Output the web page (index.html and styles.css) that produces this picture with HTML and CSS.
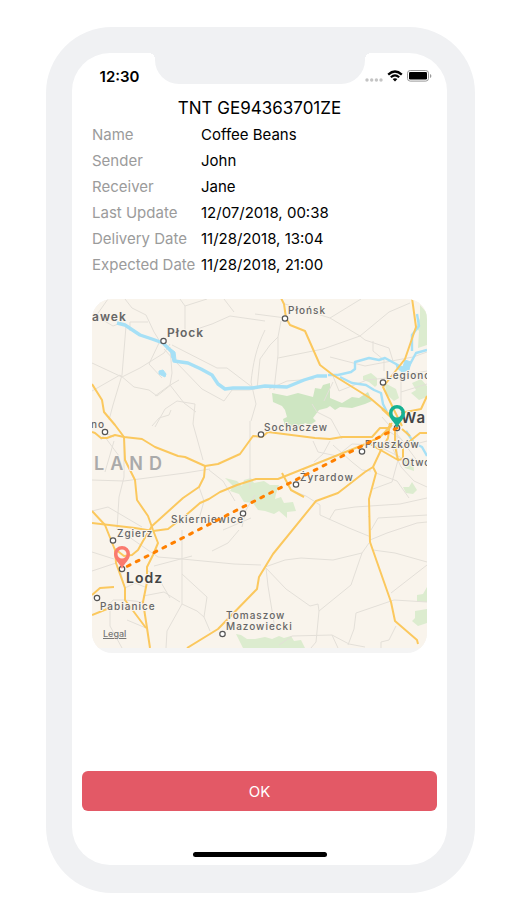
FILE: index.html
```
<!DOCTYPE html>
<html lang="en">
<head>
    <meta charset="UTF-8">
    <meta name="viewport" content="width=device-width, initial-scale=1.0">
    <title>Parcel details</title>
    <link rel="stylesheet" href="styles.css">
</head>
<body>
    <div class="phone">
        <div class="screen">
            <header class="status-bar">
                <div class="time">12:30</div>
                <div class="notch"></div>
                <div class="status-icons">
                    <svg class="signal" viewBox="0 0 18 4" aria-hidden="true">
                        <circle cx="2" cy="2" r="1.7"/>
                        <circle cx="6.7" cy="2" r="1.7"/>
                        <circle cx="11.4" cy="2" r="1.7"/>
                        <circle cx="16" cy="2" r="1.7"/>
                    </svg>
                    <svg class="wifi" viewBox="0 0 16 12" aria-hidden="true">
                        <path d="M1.2 4.6Q8-1.6 14.8 4.6" stroke-width="2.3"/>
                        <path d="M3.8 7.3Q8 3.5 12.2 7.3" stroke-width="2.1"/>
                        <path class="wifi-dot" d="M5.6 9.1Q8 7.2 10.4 9.1L8 11.5z"/>
                    </svg>
                    <svg class="battery" viewBox="0 0 25 12" aria-hidden="true">
                        <rect class="battery-case" x=".5" y=".5" width="21" height="10.6" rx="2.7"/>
                        <rect x="2" y="2" width="18" height="7.6" rx="1.3"/>
                        <path class="battery-tip" d="M23 4v4q1.4-.6 1.4-2T23 4z"/>
                    </svg>
                </div>
            </header>

            <main class="content">
                <h1>TNT GE94363701ZE</h1>

                <dl class="details">
                    <dt>Name</dt>
                    <dd>Coffee Beans</dd>
                    <dt>Sender</dt>
                    <dd>John</dd>
                    <dt>Receiver</dt>
                    <dd>Jane</dd>
                    <dt>Last Update</dt>
                    <dd>12/07/2018, 00:38</dd>
                    <dt>Delivery Date</dt>
                    <dd>11/28/2018, 13:04</dd>
                    <dt>Expected Date</dt>
                    <dd>11/28/2018, 21:00</dd>
                </dl>

                <div class="map">
                    <svg viewBox="0 0 335 349" role="img" aria-label="Route from Lodz to Warsaw">
                        <!-- forests -->
                        <g class="forest">
                            <path class="forest-dark" d="M180 94l15 3 11-3 15 4 2-9 6 1 2-4 7-2v15l12 5 10-6 7 1 9-6 4 9-7 3-13 4-12-1-5 3-5-4-3 2-8 2-6 8 3 3-6 4-5-2-6 5-14-2-2-7 4-2-2-7-3-4-9-4z"/>
                            <path d="M133 179l12 3 5 5 2-6 7-2 3 5 10-2 6 4 9 0-3 9-1 5 6-2 3 6 9-1 3 9-9 1 0 6-8-7-5 3-9-3-7-1-5-7-9-1-5-8-9-3 3-5z"/>
                            <path d="M271 77l8-3 6 5 0 7-2 2-6-5-6-2zM293 84l11 6 3 9-5 3-8-7zM320 84l9-4 6 7v11l-8 3-8-7 5-3zM328 6l7 8v32l-9 3 1-17-3-4 4-9zM311 188l6 0 3-5 5 8-4 4-7-1zM325 303v-7l6-1 4-7v15zM323 312l12-2v14l-9 3-6-5 3-3zM144 335l5 1 6 4 8 0 10-2 7 2 7-3 5 2 7-2 3 5 7-1 5 10h-62zM308 158l13 2 1 12-9-3z"/>
                        </g>

                        <!-- secondary roads -->
                        <g class="road-minor">
                            <path d="M16 0L4 17l17 10 8-3M33 0l7 9 14 7 8 17 5 8M0 64l30 14 18-9 24-15 6-9M34 27l-4 49-9 30-4 15M38 32V23h18M0 92l28-16 14 12 15 3 8 6 15-12 7-4M57 65l10-21M78 48l2 26-2 12M80 46l45 23h10l25 19"/>
                            <path d="M57 65l13 14M72 50l11 12 27 28 22 12 8-11h17l6-1M88 0l5 7V34M93 34l27-9 18-8 35 5M93 7l22-7M132 0l10 13M173 31c-9 18-12 34-14 52l5 22-5 17M63 97l15-11M78 86l14 18 12 9"/>
                            <path d="M63 128l10-18 12-8 18 3-2 20 10 36M194 19l-31-4M189 22l-3 16-8 8-10 14-3 30M186 38v18l-4 35M186 59l45-9 37-13M193 5l45 14 31-19M238 19l30 18 5 4 24 8 4 13M268 37l29-24 21-9M281 42v10l11 9V72M292 79v11M222 80l-27 2-18 8M241 77l6 15 28-11 20-2 40-7M241 83l-9 19M238 58l35 9 48-9 14-5"/>
                            <path d="M60 127l7-8 10-3 2-5M32 138v40l-5 20-2 32M32 182l61-8 25-4M117 171l14 11 12 20M107 188l5 14-5 18M158 122v32M158 154v36M0 181l32 1M0 212l16-4 34 20M22 142l-9 31M9 141l4-7 9 4M13 138l14 19"/>
                            <path d="M27 231l39 27 24 2 52 5 27 1M90 231v29M90 260V305l15 7 7 6M90 275l25 23-3 20 6 14M90 305l-15 27-1 17M55 271l12 9 11 19M62 267l38-10M24 264l-24 8M33 289l10-5 10 4M13 311l8-10 12 0M33 301l18 2M55 283l14-6M0 253l22 7M28 271l5 18M18 303v24l12 22M51 297l21-4 16 10M54 329l-19-8"/>
                            <path d="M120 252l16-8 11-13M131 231l28-12M173 268l20-7 16-2 32 2 29-7 7-10M174 269l20 21 24 17 8-2 1 7-3 31-5 6M227 312l32-26 11-32M174 269l2 18 7 43M187 346l13-9 40-1 6 13M240 336l17 9 16 3M256 346l6-16 2-16 38-13 33 2M281 251l22 3 32 9M299 294l36-28M304 327l-7 14-8 2v6M278 241l17-7 30-10 10-1M279 231l7-12 49-3M276 217l2 2"/>
                            <path d="M198 191l16 6 14 9v10l29 13 22 9M237 221l6-10 20-3 45-3 27-6M221 142l5 11 19 4 15-12 24 1 24 12M238 142l-7 13-9 8M250 140l-11-20-14-7-5-8M260 163l10 8 9 1M260 163l-19-17M293 130l16 10 17 23M296 139l13 29 13 14 13 6M284 174l21 8 12 17M289 150l23-2 23-6M305 129v25M290 118l27 31M306 161l-6 22-19 7M163 196l-9 15-4 17M309 112V82l-7-9M309 93l26-8"/>
                        </g>

                        <!-- rivers and lakes -->
                        <g class="river">
                            <path d="M25 24l8 2 15 10 12 4 11 4 9 9 2 9 14 2 13 6 11 6 6 9 7 5 8-1h19l13-2 22 1 17-7 13-4 10 0" stroke-width="3.4"/>
                            <path d="M236 76l10 0 13-3 4-3v-7l14-4 10 2 6-2 11 6 6 4 7-2 7-13 11-3M320 52v-16l7-9-2-12M248 78l12 6 14 2 8 5 7 3 2 11 4 8M314 132l8 12 8 4 5 9" stroke-width="2.4"/>
                            <path class="lake" d="M67 72l4-1 3 4-1 3-6-3zM79 50l4 3 1 8-4-2zM304 65l7 3 2-7 6 2-2 8-7 2-5-4z"/>
                        </g>

                        <!-- main roads -->
                        <g class="road-main">
                            <path d="M0 85l10 16 2 12 11 13 9 12 1 23 10 20 2 20 11 16 5 14 5 13-5 12-6 12v15l-4 20 4 26 3 20"/>
                            <path d="M0 133l3 1 6 5h6l8-3 9 2 18 2 13 8 23 9 7 1 20 9 13-2 22-10 13-18 9 1 6-5 47 6 15 1 12-2h30l8-9h8l4-5"/>
                            <path d="M113 167l-1 11-5 10-16 11-31 28-9 15-5 9-6 5-8 1-9-7"/>
                            <path d="M0 224l43 5 18 3 15-2 17-13 15-13 9-4 11-7 17-7 19-6h22l90-36 12-6 12-12"/>
                            <path d="M0 212l13 14 6 15 4 10 1 13 9 25v12l21 28M0 296l8-7 14-1M0 316l15-6"/>
                            <path d="M95 349l31-19 39-40 2-12 14-23 43-53 22-8 27-21 8-5 8-17 7-12 2-15"/>
                            <path d="M281 168l3 6-7 26 1 43 21 60 4 19 22 19 1 4M190 174l9 17 13 7"/>
                            <path d="M189-1l3 6 2 14 4 7 15 6 15 34 13 10 37 23 20 17 9 11M320-1l4 29-11 32-22 28 12 25 7 14"/>
                            <path d="M309 114l20-4 6-13M278 145l28 16 5-1v-12l12-10 5-4h7M303 129v18l3 14M303 148h11M310 130l8 7M290 110l15 14 7-10"/>
                        </g>

                        <!-- towns -->
                        <g class="town">
                            <circle cx="71.500" cy="42" r="2.700"/>
                            <circle cx="193" cy="19.500" r="2.700"/>
                            <circle cx="291" cy="83.500" r="2.700"/>
                            <circle cx="13" cy="133" r="2.700"/>
                            <circle cx="169" cy="135.500" r="2.700"/>
                            <circle cx="270" cy="152.500" r="2.700"/>
                            <circle cx="204" cy="185.500" r="2.700"/>
                            <circle cx="151" cy="214.500" r="2.700"/>
                            <circle cx="21" cy="241.500" r="2.700"/>
                            <circle cx="5" cy="299" r="2.700"/>
                            <circle cx="130.500" cy="335" r="2.700"/>
                            <circle cx="30" cy="270" r="2.700"/>
                            <circle cx="305" cy="129" r="2.700"/>
                        </g>

                        <text class="country" x="2" y="171">LAND</text>
                        <g class="label-medium">
                            <text x="0" y="22">awek</text>
                            <text x="75" y="38">Płock</text>
                        </g>
                        <g class="label-small">
                            <text x="196" y="15">Płońsk</text>
                            <text x="294" y="80">Legiono</text>
                            <text x="-1" y="129">no</text>
                            <text x="172" y="132">Sochaczew</text>
                            <text x="273" y="149">Pruszków</text>
                            <text x="310" y="167">Otwo</text>
                            <text x="208" y="182">Żyrardow</text>
                            <text x="79" y="224">Skierniewice</text>
                            <text x="25" y="238">Zgierz</text>
                            <text x="8" y="311">Pabianice</text>
                            <text x="134" y="320">Tomaszow</text>
                            <text x="134" y="331">Mazowiecki</text>
                        </g>
                        <g class="label-large">
                            <text class="capital" x="309" y="124">Wa</text>
                            <text x="34" y="284">Lodz</text>
                        </g>

                        <!-- route and its two ends -->
                        <path class="route" d="M305 129L30 270"/>
                        <path class="pin pin-start" d="M30 270C27 263 22 261 22 255a8 8 0 0 1 16 0C38 261 33 263 30 270zM30 250.500a4.500 4.500 0 1 0 0 9a4.500 4.500 0 1 0 0-9z"/>
                        <path class="pin pin-end" d="M305 129C302 122 297 120 297 114a8 8 0 0 1 16 0C313 120 308 122 305 129zM305 109.500a4.500 4.500 0 1 0 0 9a4.500 4.500 0 1 0 0-9z"/>
                    </svg>
                    <a class="legal" href="#">Legal</a>
                </div>
            </main>

            <footer class="actions">
                <button type="button" class="ok-btn">OK</button>
                <div class="home-indicator"></div>
            </footer>
        </div>
    </div>
</body>
</html>
```
FILE: styles.css
```
* {
    margin: 0;
    padding: 0;
    box-sizing: border-box;
}

body {
    font-family: 'Inter', 'Liberation Sans', sans-serif;
    font-size: 15px;
    color: #000;
    background: white;
    min-height: 100vh;
    padding: 27px 45px 27px 46px;
    display: flex;
    justify-content: center;
}

.phone {
    flex: 1;
    max-width: 480px;
    display: flex;
    background: #f0f1f3;
    border-radius: 66px;
    padding: 26px 28px 28px 26px;
}

.screen {
    flex: 1;
    min-width: 0;
    display: flex;
    flex-direction: column;
    background: white;
    border-radius: 38px;
}

/* Status bar */
.status-bar {
    display: grid;
    grid-template-columns: 1fr 56% 1fr;
    height: 45px;
}

.time {
    font-weight: 600;
    line-height: 18px;
    padding-top: 15px;
    text-align: right;
    padding-right: 15px;
}

.notch {
    position: relative;
    height: 31px;
    background: #f0f1f3;
    border-radius: 0 0 24px 24px;
}

.notch::before,
.notch::after {
    content: '';
    position: absolute;
    top: 0;
    width: 6px;
    height: 6px;
}

.notch::before {
    right: 100%;
    background: radial-gradient(circle at 0 100%, transparent 6px, #f0f1f3 6px);
}

.notch::after {
    left: 100%;
    background: radial-gradient(circle at 100% 100%, transparent 6px, #f0f1f3 6px);
}

.status-icons {
    display: flex;
    align-items: center;
    height: 46px;
    gap: 4px;
}

.signal {
    width: 18px;
    height: 4px;
    margin-top: 8px;
    fill: #c4c4c4;
}

.wifi {
    width: 16px;
    height: 12px;
    fill: none;
    stroke: #000;
}

.wifi-dot {
    fill: #000;
    stroke: none;
}

.battery {
    width: 25px;
    height: 12px;
}

.battery-case {
    fill: none;
    stroke: #999;
}

.battery-tip {
    fill: #999;
}

/* Parcel details */
.content {
    padding: 0 20px;
}

h1 {
    font-size: 17px;
    font-weight: 400;
    line-height: 21px;
    text-align: center;
    margin-bottom: 3px;
}

.details {
    display: grid;
    grid-template-columns: 109px 1fr;
    line-height: 26px;
    white-space: nowrap;
    margin-bottom: 21px;
}

.details dt {
    color: #9b9b9b;
}

/* Map */
.map {
    position: relative;
    overflow: hidden;
    background: #f4f4f4;
    border-radius: 20px;
    padding-bottom: 5px;
}

.map svg {
    display: block;
    width: 100%;
    background: #f9f4ec;
}

.forest {
    fill: #dceccf;
}

.forest-dark {
    fill: #cee6c2;
}

.road-minor {
    fill: none;
    stroke: #e3dfd8;
    stroke-width: 1;
}

.road-main {
    fill: none;
    stroke: #fbc85e;
    stroke-width: 2;
    stroke-linejoin: round;
}

.river {
    fill: none;
    stroke: #a6e0f6;
    stroke-linejoin: round;
}

.lake {
    fill: #a6e0f6;
}

.town {
    fill: white;
    stroke: #555;
    stroke-width: 1.2;
}

.map text {
    fill: #666;
    stroke: #f9f4ec;
    stroke-width: 2;
    paint-order: stroke;
    stroke-linejoin: round;
    letter-spacing: 1px;
}

.map .label-small text {
    font-size: 10px;
    font-weight: 500;
}

.map .label-medium text {
    font-size: 12px;
    font-weight: 600;
}

.map .label-large text {
    font-size: 14px;
    font-weight: 600;
    fill: #444;
}

.map .label-large .capital {
    font-size: 15px;
}

.map .country {
    font-size: 18px;
    font-weight: 600;
    letter-spacing: 6px;
    fill: #aaa;
}

.route {
    fill: none;
    stroke: #ff8000;
    stroke-width: 3;
    stroke-linecap: round;
    stroke-dasharray: 3 7;
}

.pin {
    fill-rule: evenodd;
}

.pin-start {
    fill: #fa7a6e;
}

.pin-end {
    fill: #16b193;
}

.legal {
    position: absolute;
    left: 11px;
    bottom: 13px;
    font-size: 9px;
    line-height: 12px;
    font-weight: 500;
    color: #777;
}

/* Bottom of the screen */
.actions {
    margin-top: auto;
    padding: 20px 10px 8px;
}

.ok-btn {
    display: block;
    width: 100%;
    height: 40px;
    border: none;
    border-radius: 6px;
    background: #e35966;
    color: white;
    font-family: inherit;
    font-size: 15px;
    cursor: pointer;
}

.ok-btn:hover {
    background: #d64c59;
}

.home-indicator {
    width: 134px;
    height: 5px;
    margin: 41px auto 0;
    border-radius: 3px;
    background: #000;
}
```
